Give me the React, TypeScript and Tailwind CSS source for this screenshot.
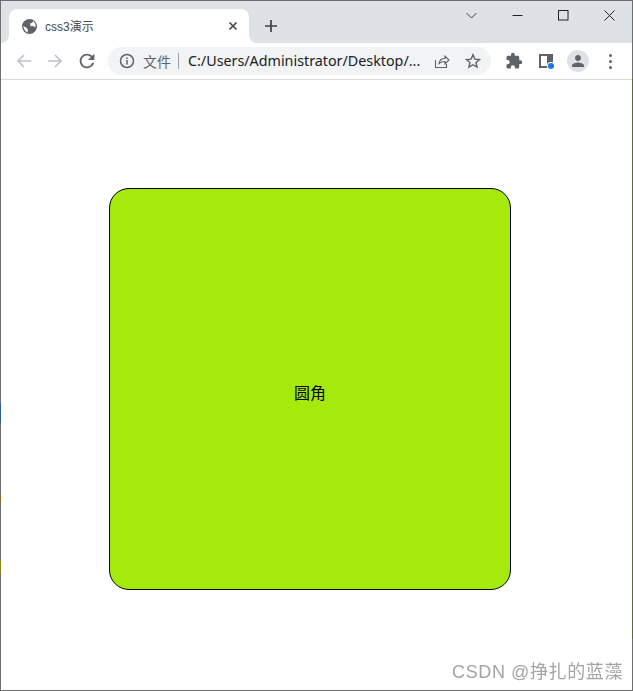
/**
 * Chrome window showing a css3 rounded-corner demo
 */

import { MdExtension, MdPerson, MdRefresh } from 'react-icons/md';

const UI_FONT = 'font-["Noto_Sans","Noto_Sans_CJK_SC",sans-serif]';

function TitleBar() {
  return (
    <div className="flex h-[42px] shrink-0 bg-[#dee1e6]">
      {/* tab */}
      <div className="relative mt-[8px] ml-[8px] flex h-[34px] w-[240px] items-center rounded-t-[8px] bg-white pt-[2px] pl-[13px]">
        {/* flared bottom corners */}
        <span className="absolute bottom-0 -left-[8px] size-[8px] bg-white">
          <span className="block size-full rounded-br-[8px] bg-[#dee1e6]" />
        </span>
        <span className="absolute -right-[8px] bottom-0 size-[8px] bg-white">
          <span className="block size-full rounded-bl-[8px] bg-[#dee1e6]" />
        </span>
        <svg className="-mt-[2px] size-[15px]" viewBox="0 0 16 16">
          <circle cx="8" cy="8" r="8" fill="#5f6368" />
          <path d="M8.500 4.800c1.800-.3 3-1.300 3.600-2.800l2.400 3.200-.3 3.800-2.300-1.600-2.600.3z" fill="#fff" />
          <path d="M1.300 7.500l3.400 1.700 1.600 2.200-.4 3-2.300-1.700-1.800-3z" fill="#fff" />
        </svg>
        <span className='ml-[8px] font-["Liberation_Sans","Noto_Sans_CJK_SC",sans-serif] text-[12px] text-[#45494e]'>css3演示</span>
        <svg className="absolute top-[12px] right-[11px] size-[10px]" viewBox="0 0 10 10">
          <path d="M1.500 1.500l7 7M8.500 1.500l-7 7" stroke="#45494e" strokeWidth="1.700" />
        </svg>
      </div>

      {/* new tab */}
      <svg className="mt-[19px] ml-[16px] size-[12px]" viewBox="0 0 12 12">
        <path d="M6 0v12M0 6h12" stroke="#3c4043" strokeWidth="1.700" />
      </svg>

      {/* window controls */}
      <div className="ml-auto flex items-start">
        <svg className="mt-[9px] mr-[35px] size-[11px]" viewBox="0 0 11 11" fill="none">
          <path d="M.5 3l5 5 5-5" stroke="#3c4043" />
        </svg>
        <svg className="mt-[9px] mr-[35px] size-[11px]" viewBox="0 0 11 11" fill="none">
          <path d="M.5 5.500h10" stroke="#202124" />
        </svg>
        <svg className="mt-[9px] mr-[35px] size-[11px]" viewBox="0 0 11 11" fill="none">
          <rect x=".5" y=".5" width="9.500" height="9.500" stroke="#202124" />
        </svg>
        <svg className="mt-[9px] mr-[17px] size-[11px]" viewBox="0 0 11 11" fill="none">
          <path d="M.5.5l10 10M10.500.5l-10 10" stroke="#202124" />
        </svg>
      </div>
    </div>
  );
}

function Toolbar() {
  return (
    <div className="flex h-[37px] shrink-0 items-center border-b border-[#dadce0] bg-white">
      <svg className="ml-[15px] size-[16px]" viewBox="0 0 16 16" fill="none">
        <path d="M15 8H2M8 2L2 8l6 6" stroke="#bdc1c6" strokeWidth="1.600" />
      </svg>
      <svg className="ml-[15px] size-[16px]" viewBox="0 0 16 16" fill="none">
        <path d="M1 8h13M8 2l6 6-6 6" stroke="#bdc1c6" strokeWidth="1.600" />
      </svg>
      <MdRefresh className="ml-[13px] size-[22px] text-[#5f6368]" />

      {/* address bar */}
      <div className="ml-[10px] flex h-[28px] w-[383px] items-center rounded-full bg-[#f1f3f4] pl-[11px]">
        <svg className="size-[16px]" viewBox="0 0 16 16" fill="none">
          <circle cx="8" cy="8" r="6.500" stroke="#5f6368" strokeWidth="1.500" />
          <path d="M8 7v4.500M8 4.400v1.500" stroke="#5f6368" strokeWidth="1.500" />
        </svg>
        <span className="ml-[8px] text-[14px] text-[#5f6368]">文件</span>
        <span className="ml-[7px] h-[16px] w-px bg-[#9aa0a6]" />
        <span className="ml-[9px] whitespace-nowrap text-[14.3px] text-[#202124]">C:/Users/Administrator/Desktop/...</span>
        <svg className="ml-auto size-[16px] shrink-0" viewBox="0 0 16 16" fill="none">
          <path
            d="M1.500 7v7.500h11V11M5 10.500c.5-3 3-5 6-5V3l4 4-4 4V8.500c-2.500 0-4.500.5-6 2z"
            stroke="#5f6368"
            strokeWidth="1.100"
          />
        </svg>
        <svg className="mr-[10px] ml-[15px] size-[16px] shrink-0" viewBox="0 0 16 16" fill="none">
          <path
            d="M8 1.800l1.900 4.300 4.600.4-3.500 3 1.100 4.600L8 11.700l-4.100 2.400L5 9.500l-3.500-3 4.600-.4z"
            stroke="#5f6368"
            strokeWidth="1.400"
          />
        </svg>
      </div>

      <MdExtension className="ml-[14px] size-[18px] text-[#5f6368]" />

      {/* side panel */}
      <div className="relative ml-[16px] size-[14px] border-[2px] border-r-[6px] border-[#5f6368] bg-white">
        <span className="absolute -right-[7px] -bottom-[3px] size-[6px] rounded-full bg-[#1a73e8] ring-1 ring-white" />
      </div>

      <div className="ml-[14px] flex size-[22px] items-center justify-center rounded-full bg-[#dee1e6]">
        <MdPerson className="size-[18px] text-[#5f6368]" />
      </div>

      {/* menu */}
      <div className="ml-[20px] flex flex-col gap-[3px]">
        <span className="size-[3px] rounded-full bg-[#5f6368]" />
        <span className="size-[3px] rounded-full bg-[#5f6368]" />
        <span className="size-[3px] rounded-full bg-[#5f6368]" />
      </div>
    </div>
  );
}

export default function App() {
  return (
    <div className={`relative flex h-[691px] w-[633px] flex-col border border-[#6e6e6e] bg-white ${UI_FONT}`}>
      <TitleBar />
      <Toolbar />

      {/* page */}
      <div className="flex-1 pt-[108px] pl-[108px]">
        <div className='flex h-[402px] w-[402px] items-center justify-center rounded-[20px] border border-black bg-[#a6e90c] pt-[6px] font-["Noto_Sans_CJK_SC",sans-serif] text-[16px] text-black'>
          圆角
        </div>
      </div>

      {/* desktop colours showing along the window edge */}
      <span className="absolute -right-px top-[78px] h-[560px] w-px bg-[#5a6e2a]" />
      <span className="absolute -left-px top-[402px] h-[20px] w-px bg-[#2c5f94]" />
      <span className="absolute -left-px top-[494px] h-[7px] w-px bg-[#8a6a20]" />
      <span className="absolute -left-px top-[559px] h-[14px] w-px bg-[#8a8a20]" />

      {/* watermark */}
      <span className='absolute right-[9px] bottom-[4px] font-["Liberation_Sans","Noto_Sans_CJK_SC",sans-serif] text-[18px] tracking-[.6px] text-[#a4a4a4] blur-[.4px]'>
        CSDN @挣扎的蓝藻
      </span>
    </div>
  );
}
